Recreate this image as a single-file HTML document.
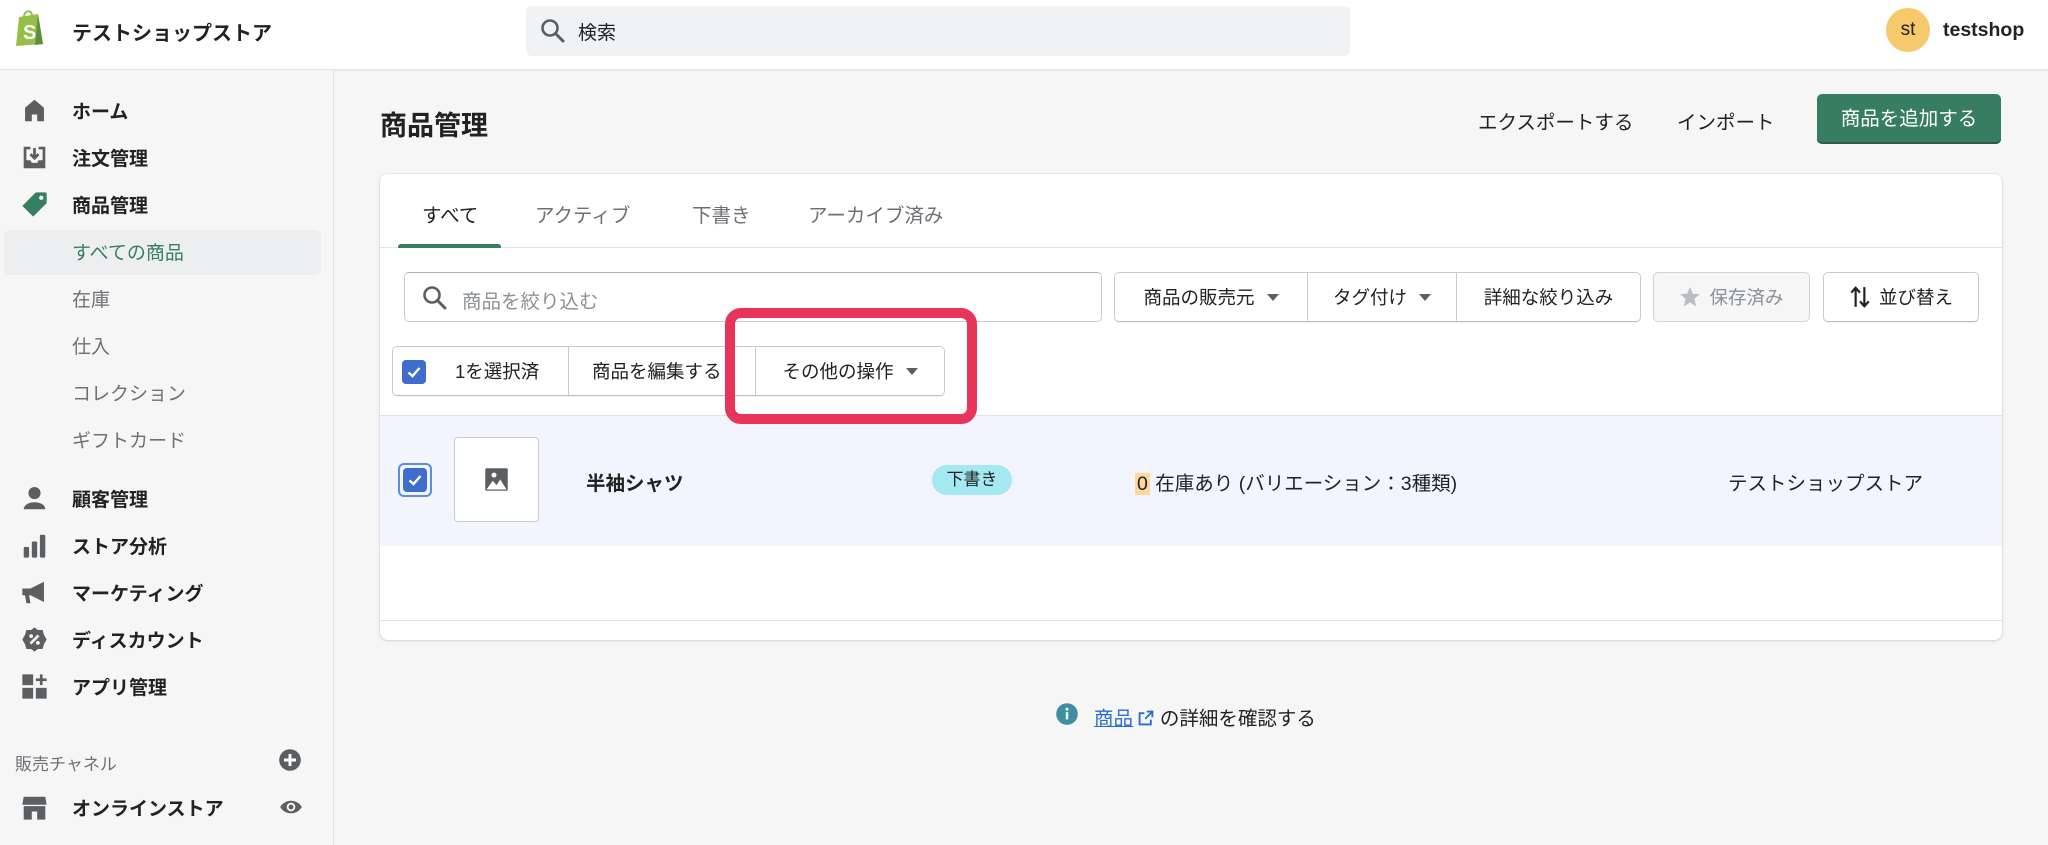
<!DOCTYPE html>
<html><head><meta charset="utf-8"><style>
*{box-sizing:border-box;margin:0;padding:0}
body{width:2048px;height:845px;overflow:hidden;background:#f6f6f7;font-family:"Liberation Sans","Noto Sans CJK JP",sans-serif;color:#202223;font-size:19px;position:relative}
.a{position:absolute;white-space:nowrap}
.top{left:0;top:0;width:2048px;height:70px;background:#fff;border-bottom:1px solid #e1e3e5;box-shadow:0 1px 2px rgba(0,0,0,.06)}
.side{left:0;top:70px;width:334px;height:775px;border-right:1px solid #e1e3e5;background:#f6f6f7}
.nav{left:72px;font-size:19px;font-weight:700;color:#202223}
.sub{left:72px;font-size:19px;color:#6d7175}
.ic{left:21px;width:27px;height:27px}
.btn{border:1px solid #c9cccf;border-bottom-color:#babfc3;background:#fff;box-shadow:0 1px 0 rgba(0,0,0,.05);display:flex;align-items:center;justify-content:center;font-size:18.5px;color:#202223}
.caret{display:inline-block;width:0;height:0;border-left:6px solid transparent;border-right:6px solid transparent;border-top:7px solid #5c5f62;margin-left:12px}
</style></head><body>
<div class="a top"></div>
<svg class="a" style="left:12px;top:8px" width="36" height="40" viewBox="0 0 36 40"><path d="M7 9 L26 6 L31 36 L4 38 Z" fill="#95bf47"/><path d="M26 6 L31 36 L23 37 Z" fill="#5e8e3e"/><path d="M12 9 C12 2 20 1 20 8" stroke="#95bf47" stroke-width="2" fill="none"/><text x="11" y="31" font-size="20" font-weight="700" fill="#fff" font-family="Liberation Sans">S</text></svg>
<div class="a" style="left:72px;top:17px;font-size:20px;font-weight:700">テストショップストア</div>
<div class="a" style="left:526px;top:6px;width:824px;height:50px;background:#f1f2f3;border-radius:6px"></div>
<svg class="a" style="left:540px;top:18px" width="26" height="26" viewBox="0 0 26 26"><circle cx="10" cy="10" r="7.5" stroke="#5c5f62" stroke-width="2.6" fill="none"/><path d="M15.5 15.5 L23 23" stroke="#5c5f62" stroke-width="3" stroke-linecap="round"/></svg>
<div class="a" style="left:578px;top:18px;font-size:19px;color:#202223">検索</div>
<div class="a" style="left:1886px;top:8px;width:44px;height:44px;border-radius:50%;background:#f6c96c;text-align:center;line-height:44px;font-size:19px">st</div>
<div class="a" style="left:1943px;top:19px;font-size:19.5px;font-weight:700">testshop</div>

<div class="a side"></div>
<div class="a" style="left:4px;top:230px;width:317px;height:45px;background:#edeeef;border-radius:6px"></div>
<svg class="a ic" style="top:97px" viewBox="0 0 20 20"><path d="M3 8 L10 2 L17 8 V18 H12 V13 H8 V18 H3Z" fill="#5c5f62"/></svg>
<svg class="a ic" style="top:144px" viewBox="0 0 20 20"><path d="M2 2 H7 V4 H4 V12 H7 L8 14 H12 L13 12 H16 V4 H13 V2 H18 V18 H2Z" fill="#5c5f62"/><path d="M10 3 V10 M7 7.5 L10 10.5 L13 7.5" stroke="#5c5f62" stroke-width="2" fill="none"/></svg>
<svg class="a ic" style="top:191px" viewBox="0 0 20 20"><path d="M11 1 H18 A1 1 0 0 1 19 2 V9 L9 19 L1 11Z" fill="#36805f"/><circle cx="15" cy="5" r="1.6" fill="#f6f6f7"/></svg>
<div class="a nav" style="top:97px">ホーム</div>
<div class="a nav" style="top:144px">注文管理</div>
<div class="a nav" style="top:191px">商品管理</div>
<div class="a sub" style="top:238px;color:#36805f">すべての商品</div>
<div class="a sub" style="top:285px">在庫</div>
<div class="a sub" style="top:332px">仕入</div>
<div class="a sub" style="top:379px">コレクション</div>
<div class="a sub" style="top:426px">ギフトカード</div>
<svg class="a ic" style="top:485px" viewBox="0 0 20 20"><circle cx="10" cy="6" r="4.5" fill="#5c5f62"/><path d="M2 18 C2 11 18 11 18 18Z" fill="#5c5f62"/></svg>
<svg class="a ic" style="top:532px" viewBox="0 0 20 20"><rect x="2" y="11" width="4" height="8" rx="1" fill="#5c5f62"/><rect x="8" y="7" width="4" height="12" rx="1" fill="#5c5f62"/><rect x="14" y="2" width="4" height="17" rx="1" fill="#5c5f62"/></svg>
<svg class="a ic" style="top:579px" viewBox="0 0 20 20"><path d="M1 7 H7 L17 2 V17 L7 12 H6 L7 18 H4 L3 12 H1Z" fill="#5c5f62"/></svg>
<svg class="a ic" style="top:626px" viewBox="0 0 20 20"><path d="M10 1 L12.5 3 L16 3 L17 6.5 L19 10 L17 13.5 L16 17 L12.5 17 L10 19 L7.5 17 L4 17 L3 13.5 L1 10 L3 6.5 L4 3 L7.5 3Z" fill="#5c5f62"/><path d="M7 13 L13 7" stroke="#f6f6f7" stroke-width="2"/><circle cx="7.5" cy="7.5" r="1.4" fill="#f6f6f7"/><circle cx="12.5" cy="12.5" r="1.4" fill="#f6f6f7"/></svg>
<svg class="a ic" style="top:673px" viewBox="0 0 20 20"><rect x="1" y="1" width="8" height="8" fill="#5c5f62"/><rect x="1" y="11" width="8" height="8" fill="#5c5f62"/><rect x="11" y="11" width="8" height="8" fill="#5c5f62"/><path d="M15 1 V9 M11 5 H19" stroke="#5c5f62" stroke-width="2"/></svg>
<div class="a nav" style="top:485px">顧客管理</div>
<div class="a nav" style="top:532px">ストア分析</div>
<div class="a nav" style="top:579px">マーケティング</div>
<div class="a nav" style="top:626px">ディスカウント</div>
<div class="a nav" style="top:673px">アプリ管理</div>
<div class="a" style="left:15px;top:750px;font-size:17px;color:#6d7175">販売チャネル</div>
<svg class="a" style="left:278px;top:748px" width="24" height="24" viewBox="0 0 20 20"><circle cx="10" cy="10" r="9" fill="#5c5f62"/><path d="M10 5 V15 M5 10 H15" stroke="#fff" stroke-width="2.4"/></svg>
<svg class="a ic" style="top:794px" viewBox="0 0 20 20"><path d="M2 2 H18 L19 8 H1Z" fill="#5c5f62"/><path d="M2 9 H18 V19 H12 V13 H8 V19 H2Z" fill="#5c5f62"/></svg>
<div class="a nav" style="top:794px">オンラインストア</div>
<svg class="a" style="left:279px;top:795px" width="24" height="24" viewBox="0 0 20 20"><path d="M1 10 C5 3 15 3 19 10 C15 17 5 17 1 10Z" fill="#5c5f62"/><circle cx="10" cy="10" r="3.6" fill="#f6f6f7"/><circle cx="10" cy="10" r="2" fill="#5c5f62"/></svg>

<div class="a" style="left:380px;top:104px;font-size:27px;font-weight:700">商品管理</div>
<div class="a" style="left:1478px;top:106px;font-size:19.5px">エクスポートする</div>
<div class="a" style="left:1677px;top:106px;font-size:19.5px">インポート</div>
<div class="a" style="left:1817px;top:94px;width:184px;height:50px;background:#377d61;border-radius:5px;color:#fff;font-size:19.5px;text-align:center;line-height:50px;box-shadow:inset 0 -2px 0 #2a5f49">商品を追加する</div>

<div class="a" style="left:380px;top:174px;width:1622px;height:466px;background:#fff;border-radius:8px;box-shadow:0 0 0 1px rgba(63,63,68,.05),0 1px 3px rgba(63,63,68,.15);overflow:hidden">
 <div class="a" style="left:0;top:73px;width:1622px;height:1px;background:#e1e3e5"></div>
 <div class="a" style="left:18px;top:70px;width:103px;height:4px;background:#36805f;border-radius:3px 3px 0 0"></div>
 <div class="a" style="left:42px;top:25px;font-size:19.5px">すべて</div>
 <div class="a" style="left:155px;top:25px;font-size:19.5px;color:#6d7175">アクティブ</div>
 <div class="a" style="left:312px;top:25px;font-size:19.5px;color:#6d7175">下書き</div>
 <div class="a" style="left:428px;top:25px;font-size:19.5px;color:#6d7175">アーカイブ済み</div>
 <div class="a" style="left:24px;top:98px;width:698px;height:50px;border:1px solid #c9cccf;border-top-color:#aeb4b9;border-radius:5px"></div>
 <svg class="a" style="left:42px;top:111px" width="26" height="26" viewBox="0 0 26 26"><circle cx="10" cy="10" r="7.5" stroke="#5c5f62" stroke-width="2.6" fill="none"/><path d="M15.5 15.5 L23 23" stroke="#5c5f62" stroke-width="3" stroke-linecap="round"/></svg>
 <div class="a" style="left:82px;top:111px;font-size:19.5px;color:#8c9196">商品を絞り込む</div>
 <div class="a btn" style="left:734px;top:98px;width:194px;height:50px;border-radius:5px 0 0 5px">商品の販売元<span class="caret"></span></div>
 <div class="a btn" style="left:927px;top:98px;width:150px;height:50px;border-radius:0">タグ付け<span class="caret"></span></div>
 <div class="a btn" style="left:1076px;top:98px;width:185px;height:50px;border-radius:0 5px 5px 0">詳細な絞り込み</div>
 <div class="a btn" style="left:1273px;top:98px;width:157px;height:50px;border-radius:5px;background:#f6f6f7;border-color:#d2d5d8;color:#8c9196;box-shadow:none"><svg width="22" height="22" viewBox="0 0 20 20" style="margin-right:8px"><path d="M10 1 L12.6 7 L19 7.5 L14 11.7 L15.6 18.5 L10 15 L4.4 18.5 L6 11.7 L1 7.5 L7.4 7Z" fill="#babec3"/></svg>保存済み</div>
 <div class="a btn" style="left:1443px;top:98px;width:156px;height:50px;border-radius:5px"><svg width="22" height="24" viewBox="0 0 20 22" style="margin-right:8px"><path d="M6 20 V3 M2 7 L6 2.5 L10 7 M14 2 V19 M10 15 L14 19.5 L18 15" stroke="#202223" stroke-width="2" fill="none"/></svg>並び替え</div>
 <div class="a btn" style="left:12px;top:172px;width:177px;height:50px;border-radius:5px 0 0 5px;justify-content:flex-start;padding-left:62px">1を選択済</div>
 <div class="a" style="left:22px;top:186px;width:24px;height:24px;background:#3f6dcb;border-radius:4px"><svg width="24" height="24" viewBox="0 0 24 24"><path d="M6.5 12.5 L10.5 16 L17.5 8" stroke="#fff" stroke-width="2.4" fill="none"/></svg></div>
 <div class="a btn" style="left:188px;top:172px;width:188px;height:50px;border-radius:0;justify-content:flex-start;padding-left:23px;overflow:hidden">商品を編集する</div>
 <div class="a btn" style="left:375px;top:172px;width:190px;height:50px;border-radius:0 5px 5px 0">その他の操作<span class="caret"></span></div>
 <div class="a" style="left:0;top:241px;width:1622px;height:131px;background:#f2f5fd;border-top:1px solid #e1e3e5"></div>
 <div class="a" style="left:18px;top:289px;width:34px;height:34px;border:2px solid #5c8bea;border-radius:6px;padding:3px"><div style="width:24px;height:24px;background:#3f6dcb;border-radius:4px"><svg width="24" height="24" viewBox="0 0 24 24"><path d="M6.5 12.5 L10.5 16 L17.5 8" stroke="#fff" stroke-width="2.4" fill="none"/></svg></div></div>
 <div class="a" style="left:74px;top:263px;width:85px;height:85px;background:#fff;border:1px solid #c9cccf;border-radius:4px"></div>
 <svg class="a" style="left:104px;top:293px" width="25" height="25" viewBox="0 0 20 20"><rect x="1" y="1" width="18" height="18" rx="1" fill="#5c5f62"/><circle cx="8" cy="6.5" r="2" fill="#fff"/><path d="M2 18 L7 11 L10 14.5 L13 10 L18 18Z" fill="#fff"/></svg>
 <div class="a" style="left:206px;top:293px;font-size:19.5px;font-weight:700">半袖シャツ</div>
 <div class="a" style="left:552px;top:291px;width:80px;height:30px;background:#a4e8f2;border-radius:15px;text-align:center;line-height:30px;font-size:17px">下書き</div>
 <div class="a" style="left:755px;top:293px;font-size:19.5px"><span style="background:#ffd79d;padding:0 2px">0</span> 在庫あり (バリエーション：3種類)</div>
 <div class="a" style="left:1348px;top:293px;font-size:19.5px">テストショップストア</div>
 <div class="a" style="left:0;top:446px;width:1622px;height:1px;background:#e1e3e5"></div>
</div>
<div class="a" style="left:725px;top:308px;width:252px;height:116px;border:10px solid #e8345a;border-radius:16px"></div>

<svg class="a" style="left:1055px;top:702px" width="24" height="24" viewBox="0 0 20 20"><circle cx="10" cy="10" r="9" fill="#3f8fa0"/><rect x="9" y="8.5" width="2" height="6" fill="#fff"/><circle cx="10" cy="6" r="1.2" fill="#fff"/></svg>
<div class="a" style="left:1094px;top:702px;font-size:19.5px"><span style="color:#2c6ecb;text-decoration:underline">商品</span> <svg width="16" height="16" viewBox="0 0 20 20" style="vertical-align:-1px"><path d="M11 2 H18 V9 M18 2 L9 11 M8 4 H2 V18 H16 V12" stroke="#2c6ecb" stroke-width="2.4" fill="none"/></svg> の詳細を確認する</div>
</body></html>
